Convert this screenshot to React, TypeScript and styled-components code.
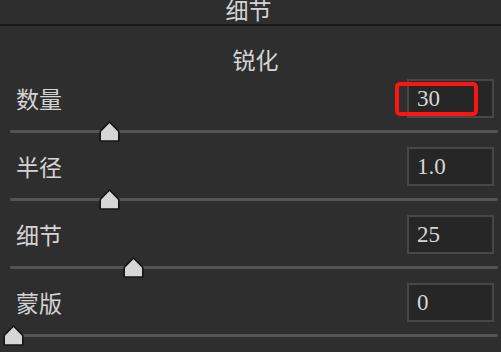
import React from "react";
import styled, { createGlobalStyle } from "styled-components";

const GlobalStyle = createGlobalStyle`
  html, body {
    margin: 0;
    padding: 0;
    background: #2e2e2e;
  }
  body {
    font-family: "Noto Sans CJK SC", "Noto Sans", sans-serif;
    color: #d4d4d4;
  }
`;

const Panel = styled.div`
  width: 501px;
  height: 352px;
  overflow: hidden;
  background: #2e2e2e;
  display: flex;
  flex-direction: column;
`;

const Header = styled.div`
  height: 24px;
  display: flex;
  align-items: flex-end;
  justify-content: center;
  overflow: hidden;
  border-bottom: 2px solid #1a1a1a;
  padding-right: 4px;
`;

const HeaderTitle = styled.span`
  font-size: 23px;
  line-height: 23px;
  padding-bottom: 3px;
`;

const SectionTitle = styled.div`
  margin-top: 22px;
  margin-bottom: 8px;
  text-align: center;
  font-size: 23px;
  line-height: 23px;
  padding-left: 10px;
`;

const Row = styled.div`
  height: 39px;
  display: flex;
  align-items: center;
  justify-content: space-between;
  padding: 0 7px 0 16px;
`;

const Label = styled.span`
  font-size: 23px;
  line-height: 23px;
`;

const ValueBox = styled.div<{ $highlight?: boolean }>`
  position: relative;
  box-sizing: border-box;
  width: 87px;
  height: 39px;
  display: flex;
  align-items: center;
  padding-left: 8px;
  background: #262626;
  border: 2px solid #474747;
  font-family: "Liberation Serif", "DejaVu Serif", serif;
  font-size: 23px;
  color: #d6d6d6;
`;

const Highlight = styled.div`
  position: absolute;
  left: -14px;
  top: 1px;
  width: 83px;
  height: 34px;
  box-sizing: border-box;
  border: 4px solid #ff1414;
  border-radius: 5px;
`;

const Slider = styled.div`
  position: relative;
  height: 29px;
  margin: 0 3px 0 10px;
`;

const Track = styled.div`
  position: absolute;
  left: 0;
  right: 0;
  top: 12px;
  height: 3px;
  border-radius: 2px;
  background: #545454;
`;

const Thumb = styled.svg`
  position: absolute;
  top: 3px;
  width: 21px;
  height: 21px;
`;

interface Param {
  label: string;
  value: string;
  fraction: number;
  highlight?: boolean;
}

const params: Param[] = [
  { label: "数量", value: "30", fraction: 0.2, highlight: true },
  { label: "半径", value: "1.0", fraction: 0.2 },
  { label: "细节", value: "25", fraction: 0.25 },
  { label: "蒙版", value: "0", fraction: 0 },
];

const SliderThumb = ({ fraction }: { fraction: number }) => (
  <Thumb viewBox="0 0 21 21" style={{ left: fraction * 482 - 7.5 }}>
    <path
      d="M10.5 1 L19.8 10.5 L19.8 19.5 Q19.8 20 19.3 20 L1.7 20 Q1.2 20 1.2 19.5 L1.2 10.5 Z"
      fill="#d6d6d6"
      stroke="#141414"
      strokeWidth="1.6"
      strokeLinejoin="round"
    />
  </Thumb>
);

const App = () => (
  <Panel>
    <GlobalStyle />
    <Header>
      <HeaderTitle>细节</HeaderTitle>
    </Header>
    <SectionTitle>锐化</SectionTitle>
    {params.map((p) => (
      <React.Fragment key={p.label}>
        <Row>
          <Label>{p.label}</Label>
          <ValueBox>
            {p.value}
            {p.highlight && <Highlight />}
          </ValueBox>
        </Row>
        <Slider>
          <Track />
          <SliderThumb fraction={p.fraction} />
        </Slider>
      </React.Fragment>
    ))}
  </Panel>
);

export default App;
